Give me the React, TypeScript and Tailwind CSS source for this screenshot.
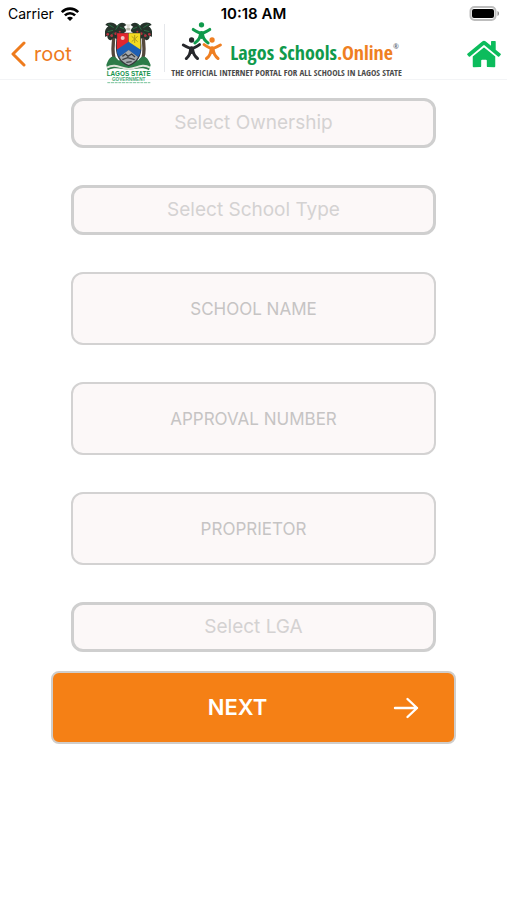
import { FaHome } from 'react-icons/fa'

const OWNERSHIP = ['Public', 'Private']
const SCHOOL_TYPES = ['Primary', 'Secondary']
const LGAS = ['Agege', 'Alimosho', 'Eti-Osa', 'Ikeja', 'Surulere']

function StatusBar() {
  return (
    <div className="grid grid-cols-3 items-center h-7 px-2 text-black">
      <div className="flex items-center gap-1.5">
        <span className="text-sm">Carrier</span>
        <svg viewBox="0 0 20 15" className="w-5 h-4" fill="none" stroke="currentColor" strokeWidth="2.6">
          <path d="M1.8 5.6C6.4 0.9 13.6 0.9 18.2 5.6" />
          <path d="M4.9 8.9C7.8 6 12.2 6 15.1 8.9" />
          <path d="M7 11.6C8.7 9.9 11.3 9.9 13 11.6L10 14.6Z" fill="currentColor" stroke="none" />
        </svg>
      </div>
      <span className="text-[15px] font-semibold text-center">10:18 AM</span>
      <svg viewBox="0 0 30 16" className="w-[30px] h-4 justify-self-end">
        <rect x="1.5" y="1" width="25" height="13" rx="4" fill="#fff" stroke="#bdbdbd" strokeWidth="2" />
        <rect x="3" y="3" width="22" height="9" rx="2" fill="#000" />
        <path d="M28.5 5v5c2-1 2-4 0-5Z" fill="#8a8a8a" />
      </svg>
    </div>
  )
}

function Crest() {
  return (
    <svg viewBox="30 15 141 192" className="w-[47px] h-16 shrink-0" role="img" aria-label="Lagos State Government">
      {/* palm trunks */}
      <path d="M56 60C58 85 46 110 62 142" fill="none" stroke="#54483c" strokeWidth="10" />
      <path d="M145 60C143 85 155 110 139 142" fill="none" stroke="#54483c" strokeWidth="10" />
      {/* palm leaves */}
      <path d="M66 32C56 20 38 20 31 30L40 34C31 40 27 52 31 66L37 62C36 70 42 76 48 76L56 68L66 72L72 60L84 56L94 48C92 42 90 38 86 36L94 30C86 20 74 22 66 32Z" fill="#26332b" />
      <path d="M135 32C145 20 163 20 170 30L161 34C170 40 174 52 170 66L164 62C165 70 159 76 153 76L145 68L135 72L129 60L117 56L107 48C109 42 111 38 115 36L107 30C115 20 127 22 135 32Z" fill="#26332b" />
      <path d="M40 28L56 38M72 28L62 44M38 50L54 46M74 36L88 42M44 64L56 54" stroke="#2a7044" strokeWidth="3" />
      <path d="M161 28L145 38M129 28L139 44M163 50L147 46M127 36L113 42M157 64L145 54" stroke="#2a7044" strokeWidth="3" />
      <g fill="#b53340">
        <circle cx="38" cy="58" r="4" />
        <circle cx="50" cy="62" r="4" />
        <circle cx="62" cy="56" r="4" />
        <circle cx="74" cy="50" r="3" />
        <circle cx="163" cy="58" r="4" />
        <circle cx="151" cy="62" r="4" />
        <circle cx="139" cy="56" r="4" />
        <circle cx="127" cy="50" r="3" />
      </g>
      <path d="M92 28h16l-5 8 5 12H92l5-12Z" fill="#deded6" />
      <path d="M94 42h12" stroke="#8f8f7d" strokeWidth="3" />
      {/* base and ribbon */}
      <path d="M34 150C44 120 58 118 70 136L130 136C142 118 156 120 167 150L162 166C140 154 122 164 101 164C80 164 62 154 38 166Z" fill="#2c7b48" />
      <path d="M36 158C60 144 78 160 101 162C124 160 142 144 165 158" fill="none" stroke="#dfe4da" strokeWidth="6" />
      {/* shield */}
      <path d="M64 53H138C136 68 141 86 139 106C136 134 118 148 101 154C84 148 66 134 63 106C61 86 66 68 64 53Z" fill="#33363a" />
      <path d="M66 55H100V104H66C64 84 68 70 66 55Z" fill="#e2272f" />
      <path d="M101 55H136C134 70 138 84 136 104H101Z" fill="#f4da20" />
      <path d="M65 104L101 80L137 104C136 114 134 120 130 126L101 106L72 126C68 120 66 114 65 104Z" fill="#1d5fb4" />
      <path d="M73 126L101 105L129 126C122 139 112 146 101 150C90 146 80 139 73 126Z" fill="#a4a9ad" />
      <path d="M82 124L92 117L99 124L110 117L120 126M82 134L98 128L119 134M94 142L110 140" fill="none" stroke="#3d4144" strokeWidth="4" />
      <circle cx="83" cy="69" r="6" fill="#f0c9c6" />
      <path d="M119 60V84M110 64L128 80M110 80L128 64" stroke="#b09c1c" strokeWidth="3" />
      <text x="101" y="184" textAnchor="middle" className="font-['Liberation_Sans'] font-bold text-[19px] fill-[#14934c]">
        LAGOS STATE
      </text>
      <text x="101" y="198" textAnchor="middle" className="font-['Liberation_Sans'] font-bold text-[14px] fill-[#4dac7a]">
        GOVERNMENT
      </text>
      <path d="M37 203H166" stroke="#7cc39c" strokeWidth="3" strokeDasharray="9 2" />
    </svg>
  )
}

function PeopleMark() {
  return (
    <svg viewBox="46 20 124 120" className="w-[41px] h-10 shrink-0" fill="none" strokeWidth="9" strokeLinecap="round">
      <g stroke="#109a4c">
        <circle cx="108" cy="31" r="8" fill="#109a4c" stroke="none" />
        <path d="M83 45C94 52 101 56 108 56C115 56 122 52 133 45" />
        <path d="M105 58C104 70 98 80 88 86M111 58C112 70 118 80 128 86" />
        <path d="M108 56V68" strokeWidth="12" />
      </g>
      <g stroke="#26272b">
        <circle cx="78" cy="77" r="8" fill="#26272b" stroke="none" />
        <path d="M53 92C64 98 71 102 78 102C85 102 92 98 102 91" />
        <path d="M75 104C75 116 70 126 62 133M81 104C82 116 87 126 96 133" />
        <path d="M78 102V113" strokeWidth="12" />
      </g>
      <g stroke="#ef7f22">
        <circle cx="140" cy="77" r="8" fill="#ef7f22" stroke="none" />
        <path d="M116 91C126 98 133 102 140 102C147 102 154 98 165 92" />
        <path d="M137 104C137 116 132 126 123 133M143 104C144 116 149 126 158 133" />
        <path d="M140 102V113" strokeWidth="12" />
      </g>
    </svg>
  )
}

function Logo() {
  return (
    <div className="flex items-center -mt-3 -mb-2">
      <Crest />
      <div className="w-px h-12 mb-2 ml-3 mr-1.5 bg-gray-200"></div>
      <div className="flex flex-col pb-1 whitespace-nowrap font-['Open_Sans_Condensed',sans-serif]">
        <div className="flex items-end gap-2 pl-2.5">
          <PeopleMark />
          <div className="flex text-xl leading-4 font-bold text-[#109a4c]">
            Lagos Schools<span className="text-[#ef7f22]">.Online</span>
            <span className="text-[7px] leading-1 text-gray-500">®</span>
          </div>
        </div>
        <span className="mt-1.5 text-[9px] leading-3 font-bold text-[#4a4a4a]">
          THE OFFICIAL INTERNET PORTAL FOR ALL SCHOOLS IN LAGOS STATE
        </span>
      </div>
    </div>
  )
}

function NavBar() {
  return (
    <nav className="grid grid-cols-[1fr_auto_1fr] items-center h-[52px] border-b border-gray-100">
      <button type="button" className="flex items-center gap-2 pl-2.5 text-[#ee7b1d]">
        <svg viewBox="0 0 16 26" className="w-4 h-[26px]" fill="none" stroke="currentColor" strokeWidth="3" strokeLinecap="round" strokeLinejoin="round">
          <path d="M14 2L3 13L14 24" />
        </svg>
        <span className="text-xl">root</span>
      </button>
      <Logo />
      <a href="#" aria-label="Home" className="justify-self-end pr-1.5 text-[#0cbc5c]">
        <FaHome className="w-[34px] h-[30px]" />
      </a>
    </nav>
  )
}

function SelectField({ label, options }: { label: string; options: string[] }) {
  return (
    <select
      aria-label={label}
      defaultValue=""
      className="appearance-none w-full h-[50px] rounded-xl border-3 border-[#cfcfcf] bg-[#fcf8f8] text-[19px] text-[#d4d2d2] text-center [text-align-last:center]"
    >
      <option value="">{label}</option>
      {options.map((option) => (
        <option key={option} value={option}>{option}</option>
      ))}
    </select>
  )
}

function TextField({ label }: { label: string }) {
  return (
    <input
      type="text"
      aria-label={label}
      placeholder={label}
      className="w-full h-[73px] rounded-xl border-2 border-[#d3d2d2] bg-[#fcf8f8] text-[17px] text-center text-gray-700 placeholder:text-[#c6c4c4]"
    />
  )
}

export default function App() {
  return (
    <div className="min-h-screen bg-white font-[Inter,sans-serif]">
      <header>
        <StatusBar />
        <NavBar />
      </header>

      <form className="flex flex-col items-center pt-[18px]">
        <div className="w-[72%] flex flex-col gap-[37px]">
          <SelectField label="Select Ownership" options={OWNERSHIP} />
          <SelectField label="Select School Type" options={SCHOOL_TYPES} />
          <TextField label="SCHOOL NAME" />
          <TextField label="APPROVAL NUMBER" />
          <TextField label="PROPRIETOR" />
          <SelectField label="Select LGA" options={LGAS} />
        </div>

        <button
          type="button"
          className="flex items-center w-4/5 h-[73px] mt-[19px] px-8 rounded-lg border-2 border-[#d0cdca] bg-[#f58015] text-white"
        >
          <span className="flex-1 text-center text-[22px] font-semibold">NEXT</span>
          <svg viewBox="0 0 32 32" className="w-8 h-8" fill="none" stroke="currentColor" strokeWidth="2.4" strokeLinecap="round" strokeLinejoin="round">
            <path d="M5 16H27M17.5 7L27 16L17.5 25" />
          </svg>
        </button>
      </form>
    </div>
  )
}
